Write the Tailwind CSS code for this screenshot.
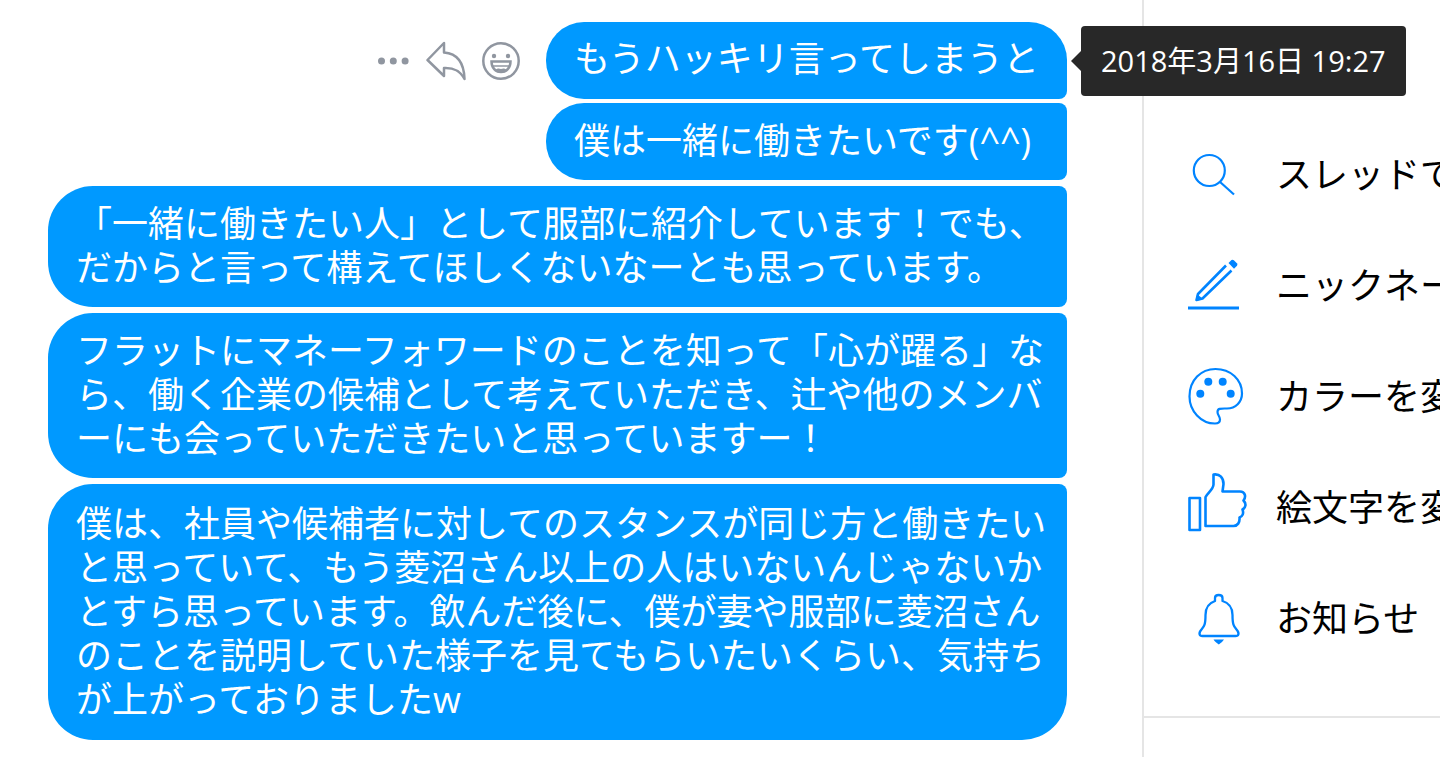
<!DOCTYPE html>
<html lang="ja">
<head>
<meta charset="utf-8">
<title>チャット</title>
<script src="https://cdn.jsdelivr.net/npm/@tailwindcss/browser@4"></script>
</head>
<body class="flex min-h-screen overflow-hidden bg-white font-['Open_Sans','Noto_Sans_CJK_JP',sans-serif] text-4xl/[44px] text-black">
<main class="flex min-w-0 flex-1 flex-col gap-1.5 whitespace-nowrap pt-[22px] pr-[75px] pb-4 pl-12 text-white">
  <div class="flex items-start justify-end gap-[25px]">
    <div class="flex h-[77px] items-center gap-[15px] text-[#9096a0]">
      <button type="button" aria-label="その他"><svg class="block h-10 w-[34px]" viewBox="0 0 34 40" fill="currentColor"><circle cx="4.500" cy="20" r="3.500"/><circle cx="16.300" cy="20" r="3.500"/><circle cx="28.100" cy="20" r="3.500"/></svg></button>
      <button type="button" aria-label="返信"><svg class="block size-10" viewBox="0 0 40 40" fill="none" stroke="currentColor" stroke-width="2.500" stroke-linejoin="round"><path d="M1.500 19 18 2v9.500C31 12.500 38 22 38.500 38 34 29.500 28 26.500 18 27V35Z"/></svg></button>
      <button type="button" aria-label="リアクション"><svg class="block size-10" viewBox="0 0 40 40" fill="none" stroke="currentColor" stroke-width="2.500"><circle cx="20" cy="20" r="17.700"/><g fill="currentColor" stroke="none"><circle cx="13" cy="15" r="2.200"/><circle cx="27" cy="15" r="2.200"/><path d="M14 29.500c2-2.500 4-2.500 6-1.500 2-1 4-1 6 1.500l-2.500 2h-7Z"/></g><path d="M10.500 20.500h19c0 6.500-4 10.500-9.500 10.500s-9.500-4-9.500-10.500Z"/><path stroke-width="1.500" d="M12 25h16"/></svg></button>
    </div>
    <div class="grid gap-1">
      <div class="relative rounded-l-[38px] rounded-tr-[38px] rounded-br-lg bg-[#0099ff] px-7 pt-[15px] pb-[18px]">もうハッキリ言ってしまうと
        <div role="tooltip" class="absolute top-1 left-full z-10 ml-[14px] rounded-[4px] bg-[#282828] px-5 py-[13px] text-[29px] before:absolute before:top-1/2 before:right-full before:-translate-y-1/2 before:border-y-[10px] before:border-r-[10px] before:border-y-transparent before:border-r-[#282828]">2018年3月16日 19:27</div>
      </div>
      <div class="rounded-l-[38px] rounded-r-lg bg-[#0099ff] px-7 pt-4 pb-[17px]">僕は一緒に働きたいです(^^)</div>
    </div>
  </div>
  <div class="rounded-l-[45px] rounded-r-lg bg-[#0099ff] pt-4 pr-5 pb-[17px] pl-7">「一緒に働きたい人」として服部に紹介しています！でも、<br>だからと言って構えてほしくないなーとも思っています。</div>
  <div class="rounded-l-[45px] rounded-r-lg bg-[#0099ff] pt-4 pr-5 pb-[17px] pl-7">フラットにマネーフォワードのことを知って「心が躍る」な<br>ら、働く企業の候補として考えていただき、辻や他のメンバ<br>ーにも会っていただきたいと思っていますー！</div>
  <div class="rounded-l-[45px] rounded-tr-lg rounded-br-[45px] bg-[#0099ff] py-[18px] pr-5 pl-7">僕は、社員や候補者に対してのスタンスが同じ方と働きたい<br>と思っていて、もう菱沼さん以上の人はいないんじゃないか<br>とすら思っています。飲んだ後に、僕が妻や服部に菱沼さん<br>のことを説明していた様子を見てもらいたいくらい、気持ち<br>が上がっておりましたw</div>
</main>
<aside class="w-[298px] shrink-0 overflow-hidden border-l-2 border-[#e5e5e5] whitespace-nowrap">
  <div class="border-b-2 border-[#e5e5e5] pt-[119px] pb-[42px] pl-10 text-[#0084ff]">
    <button type="button" class="flex h-[111px] items-center gap-7"><svg class="h-[72px] w-16 shrink-0" viewBox="0 0 64 72" fill="none" stroke="currentColor" stroke-width="2.200"><circle cx="25.300" cy="31.500" r="15.500"/><path d="m35.500 42.500 14.500 13"/></svg><span class="text-black">スレッドで</span></button>
    <button type="button" class="flex h-[111px] items-center gap-7"><svg class="h-[72px] w-16 shrink-0" viewBox="0 0 64 72" fill="none" stroke="currentColor" stroke-width="2.600" stroke-linejoin="round"><path d="M42 15.500 14 44l-1.500 6 6-1.500L47.500 20.500"/><path fill="currentColor" stroke="none" d="m44.500 13 3-3q1.200-.8 2.400.3l3 3q1 1.200.1 2.400l-3 3Z"/><path fill="currentColor" stroke="none" d="m13 44 6 5-7 2Z"/><path stroke-width="3" d="M4 58h51"/></svg><span class="text-black">ニックネー</span></button>
    <button type="button" class="flex h-[111px] items-center gap-7"><svg class="h-[72px] w-16 shrink-0" viewBox="0 0 64 72" fill="none" stroke="currentColor" stroke-width="2.200"><path d="M31 62.500C17 62.500 5.500 50 5.500 35.500 5.500 19 17 8 31.500 8 46.500 8 58 18.500 58 32.500c0 8.500-6.500 15-15 15-6 0-9.500-.5-9.500 3.500 0 3.500 2.500 4 2.500 7.500 0 3-2 4-5 4Z"/><g fill="currentColor" stroke="none"><circle cx="24.300" cy="20.700" r="4"/><circle cx="38.700" cy="20.700" r="4"/><circle cx="16.300" cy="32.700" r="4"/><circle cx="46.700" cy="32.700" r="4"/></g></svg><span class="text-black">カラーを変</span></button>
    <button type="button" class="flex h-[111px] items-center gap-7"><svg class="h-[72px] w-16 shrink-0" viewBox="0 0 64 72" fill="none" stroke="currentColor" stroke-width="2.600" stroke-linejoin="round"><path d="M5.500 26h10.500v32H5.500ZM21.500 54V25.500c0-2.500 8-8 8-13V2.500C36 1.500 39.500 6 39.500 12L38.500 19.500H56c5 0 6.500 5 3.500 9 3 3 2.500 7-1 9 1.500 4 0 7-3 8 .5 5-2 8.500-6 8.500Z"/></svg><span class="text-black">絵文字を変</span></button>
    <button type="button" class="flex h-[111px] items-center gap-7"><svg class="h-[72px] w-16 shrink-0" viewBox="0 0 64 72" fill="none" stroke="currentColor" stroke-width="2.300" stroke-linejoin="round"><path d="M31 18v-3c0-4 7.500-4 7.500 0v3C45 20 48.500 25 48.500 32c0 9 1 11 4 14.500 3.500 4 2 6.500-1 6.500h-33c-3 0-4.500-2.500-1-6.500 3-3.500 4-5.500 4-14.500C21.500 25 25 20 31 18Z"/><path fill="currentColor" stroke="none" d="M29.500 56.500h10.500q-1 2-5.200 5-4.300-3-5.300-5Z"/></svg><span class="text-black">お知らせ</span></button>
  </div>
</aside>
</body>
</html>
